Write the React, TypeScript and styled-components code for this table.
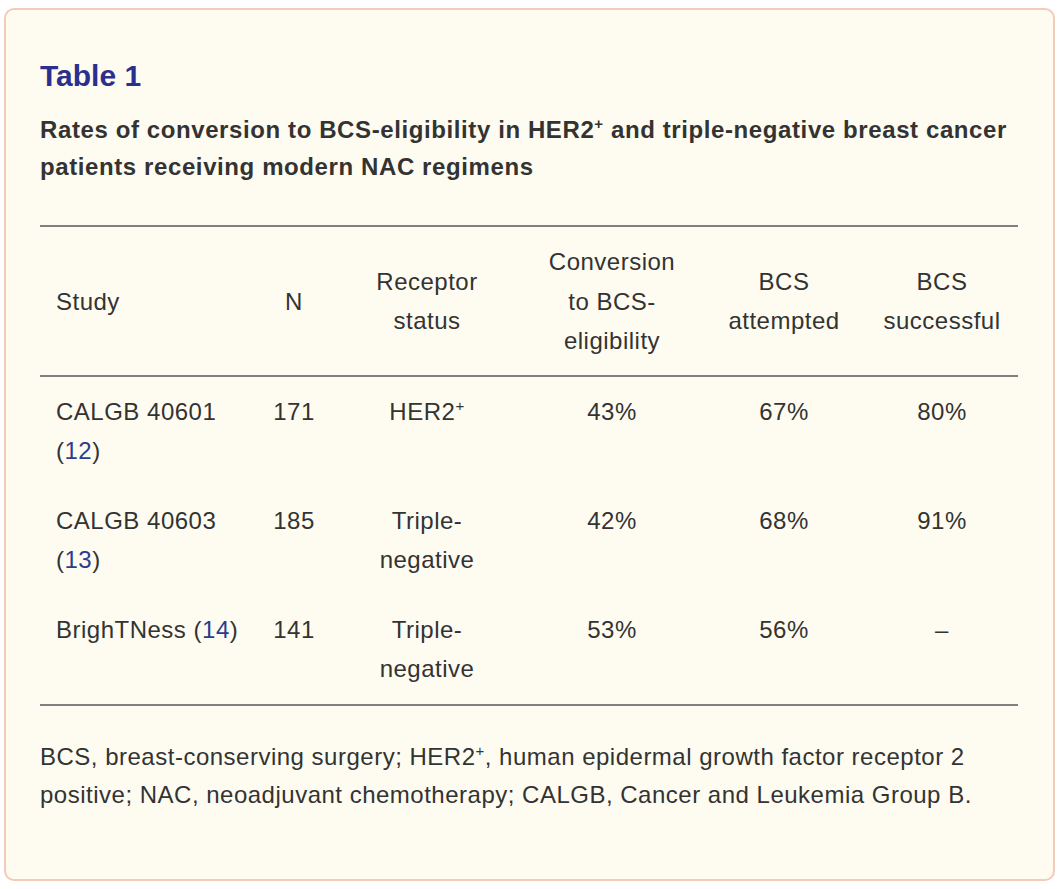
import React, {FC} from "react";
import styled, {createGlobalStyle} from "styled-components";

const GlobalStyle = createGlobalStyle`
	html, body {
		margin: 0;
		padding: 0;
		background: #ffffff;
	}
	body {
		font-family: "Liberation Sans", Arial, Helvetica, sans-serif;
		color: #333333;
	}
`;

const Page = styled.div`
	padding: 8px 5px 8px 4px;
`;

const Card = styled.section`
	box-sizing: border-box;
	height: 873px;
	background: #fefcf1;
	border: 2px solid #f4cab8;
	border-radius: 10px;
	padding: 49px 35px 0 34px;
`;

const Title = styled.h2`
	margin: 0;
	font-size: 30px;
	line-height: 34px;
	font-weight: 700;
	color: #2b2f8e;
`;

const Caption = styled.p`
	margin: 18px 0 0;
	font-size: 24px;
	line-height: 37px;
	font-weight: 700;
	letter-spacing: 0.6px;
	color: #333333;
`;

const DataTable = styled.table`
	width: 978px;
	margin-top: 40px;
	border-collapse: collapse;
	table-layout: fixed;
	font-size: 24px;
	line-height: 39.5px;
	letter-spacing: 0.5px;
	color: #333333;
	border-top: 2px solid #808080;
	border-bottom: 2px solid #808080;
`;

const HeadRow = styled.tr`
	border-bottom: 2px solid #808080;
`;

const Cell = styled.td<{$align?: "left" | "center"}>`
	padding: 15px 16px;
	vertical-align: top;
	font-weight: 400;
	text-align: ${({$align}) => $align ?? "center"};
`;

const HeadCell = styled(Cell).attrs({as: "th"})`
	padding: 15px 16px 14px;
	vertical-align: middle;
`;

const Ref = styled.a`
	color: #2b3c8c;
	text-decoration: none;
`;

const Sup = styled.sup`
	font-size: 15px;
	line-height: 0;
	vertical-align: 9px;
`;

const Footnote = styled.p`
	margin: 32px 0 0;
	font-size: 24px;
	line-height: 38px;
	letter-spacing: 0.5px;
	color: #333333;
`;

interface IRow {
	study: string;
	refId: string;
	n: string;
	receptor: React.ReactNode;
	conversion: string;
	attempted: string;
	successful: string;
}

const HER2 = <>HER2<Sup>+</Sup></>;

const rows: IRow[] = [
	{study: "CALGB 40601", refId: "12", n: "171", receptor: HER2, conversion: "43%", attempted: "67%", successful: "80%"},
	{study: "CALGB 40603", refId: "13", n: "185", receptor: "Triple-negative", conversion: "42%", attempted: "68%", successful: "91%"},
	{study: "BrighTNess", refId: "14", n: "141", receptor: "Triple-negative", conversion: "53%", attempted: "56%", successful: "–"}
];

const colWidths = [216, 76, 190, 180, 164, 152];

const App: FC = () => (
	<Page>
		<GlobalStyle />
		<Card>
			<Title>Table 1</Title>
			<Caption>
				Rates of conversion to BCS-eligibility in HER2<Sup>+</Sup> and triple-negative breast cancer patients
				receiving modern NAC regimens
			</Caption>
			<DataTable>
				<colgroup>
					{colWidths.map((w, i) => <col key={i} style={{width: w}} />)}
				</colgroup>
				<thead>
					<HeadRow>
						<HeadCell $align="left">Study</HeadCell>
						<HeadCell>N</HeadCell>
						<HeadCell>Receptor status</HeadCell>
						<HeadCell>Conversion to BCS-eligibility</HeadCell>
						<HeadCell>BCS attempted</HeadCell>
						<HeadCell>BCS successful</HeadCell>
					</HeadRow>
				</thead>
				<tbody>
					{rows.map(row => (
						<tr key={row.refId}>
							<Cell $align="left">{row.study} (<Ref href="#">{row.refId}</Ref>)</Cell>
							<Cell>{row.n}</Cell>
							<Cell>{row.receptor}</Cell>
							<Cell>{row.conversion}</Cell>
							<Cell>{row.attempted}</Cell>
							<Cell>{row.successful}</Cell>
						</tr>
					))}
				</tbody>
			</DataTable>
			<Footnote>
				BCS, breast-conserving surgery; HER2<Sup>+</Sup>, human epidermal growth factor receptor 2 positive; NAC,
				neoadjuvant chemotherapy; CALGB, Cancer and Leukemia Group B.
			</Footnote>
		</Card>
	</Page>
);

export default App;
